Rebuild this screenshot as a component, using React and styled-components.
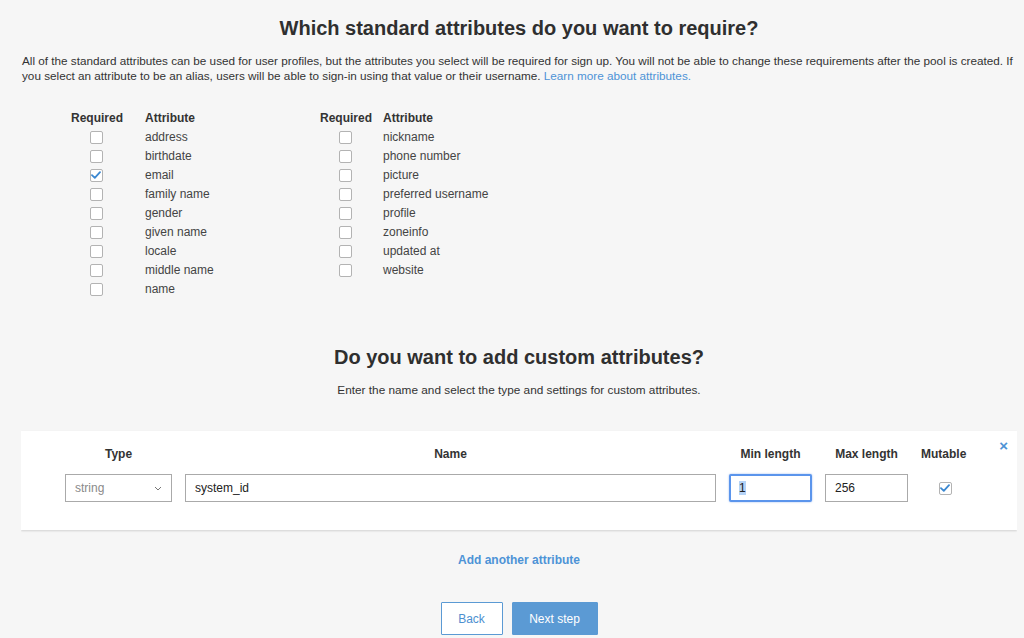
import styled, { createGlobalStyle } from 'styled-components';

const GlobalStyle = createGlobalStyle`
    html, body {
        margin: 0;
        padding: 0;
        background: #f6f6f6;
        font-family: "Liberation Sans", Arial, sans-serif;
        color: #333;
    }
`;

const Page = styled.div`
    width: 996px;
    margin-left: 21px;
    height: 638px;
    overflow: hidden;
`;

const Title = styled.h1`
    margin: 16px 0 0;
    font-size: 20px;
    line-height: 24px;
    font-weight: bold;
    text-align: center;
    color: #2f2f2f;
`;

const Intro = styled.p`
    margin: 12.5px 0 0 1px;
    font-size: 11.72px;
    line-height: 15px;
    color: #333;
    white-space: nowrap;
`;

const Link = styled.a`
    color: #4d93d6;
    text-decoration: none;
    font-weight: ${props => props.bold ? 'bold' : 'normal'};
`;

const Tables = styled.div`
    display: flex;
    margin-top: 26px;
    padding-left: 50px;
`;

const AttrTable = styled.div`
    display: grid;
    grid-template-columns: 50px auto;
    column-gap: ${props => props.gap}px;
    grid-auto-rows: 19px;
    align-items: center;
    width: ${props => props.width}px;
    align-content: start;
`;

const HeadCell = styled.div`
    font-size: 12px;
    font-weight: bold;
    color: #333;
`;

const BoxCell = styled.div`
    display: flex;
    justify-content: center;
`;

const AttrName = styled.div`
    font-size: 12px;
    color: #444;
`;

const Box = styled.span`
    box-sizing: border-box;
    width: 13px;
    height: 13px;
    border: 1px solid #b3b3b3;
    border-radius: 2px;
    background: #fff;
    display: inline-flex;
    align-items: center;
    justify-content: center;
`;

const Check = ({ checked }) => (
    <Box>
        {checked && (
            <svg width="10" height="8" viewBox="0 0 10 8">
                <path d="M1 4.2 L3.8 6.8 L9 1.2" fill="none" stroke="#3b88d1" strokeWidth="1.8" strokeLinecap="round" strokeLinejoin="round" />
            </svg>
        )}
    </Box>
);

const SubTitle = styled.h2`
    margin: 46.5px 0 0;
    font-size: 20px;
    line-height: 24px;
    font-weight: bold;
    text-align: center;
    color: #2f2f2f;
`;

const Note = styled.p`
    margin: 13.5px 0 0;
    font-size: 11.8px;
    line-height: 15px;
    text-align: center;
    color: #333;
`;

const Card = styled.div`
    position: relative;
    margin-top: 33.5px;
    background: #fff;
    box-shadow: 0 1px 2px rgba(0, 0, 0, 0.15);
    padding: 15px 0 28px 44px;
    display: grid;
    grid-template-columns: 107px 531px 83px 83px 45px;
    column-gap: 13px;
    row-gap: 12px;
    align-items: center;
`;

const ColHead = styled.div`
    font-size: 12px;
    line-height: 16px;
    font-weight: bold;
    text-align: center;
    color: #333;
`;

const Field = styled.div`
    box-sizing: border-box;
    height: 28px;
    border: 1px solid #aaa;
    background: #fff;
    display: flex;
    align-items: center;
    justify-content: space-between;
    padding: 0 ${props => props.focused ? 8 : 9}px;
    font-size: 12px;
    color: ${props => props.muted ? '#8a8a8a' : '#222'};
    ${props => props.focused && `
        border: 2px solid #5b95ec;
        border-radius: 2px;
        box-shadow: 0 0 2px rgba(70, 130, 230, 0.6);
    `}
`;

const Selected = styled.span`
    background: #b5d3f7;
`;

const Chevron = () => (
    <svg width="8" height="5" viewBox="0 0 8 5">
        <path d="M1 1 L4 4 L7 1" fill="none" stroke="#777" strokeWidth="1" />
    </svg>
);

const CenterCell = styled.div`
    display: flex;
    justify-content: center;
    padding-left: 3px;
`;

const Close = styled.span`
    position: absolute;
    top: 9px;
    right: 9px;
    font-size: 15px;
    font-weight: bold;
    line-height: 12px;
    color: #4d93d6;
`;

const AddRow = styled.div`
    margin-top: 22.5px;
    font-size: 12px;
    line-height: 15px;
    text-align: center;
`;

const Buttons = styled.div`
    display: flex;
    justify-content: center;
    gap: 9px;
    margin-top: 34.5px;
`;

const Button = styled.button`
    box-sizing: border-box;
    height: 33px;
    width: ${props => props.w}px;
    font-family: inherit;
    font-size: 12px;
    border: 1px solid #5b9ad4;
    background: ${props => props.primary ? '#5b9ad4' : '#fff'};
    color: ${props => props.primary ? '#fff' : '#4d8fd0'};
    border-radius: 1px;
    padding: 0;
`;

const left = ['address', 'birthdate', 'email', 'family name', 'gender', 'given name', 'locale', 'middle name', 'name'];
const right = ['nickname', 'phone number', 'picture', 'preferred username', 'profile', 'zoneinfo', 'updated at', 'website'];

const Table = ({ items, gap, width }) => (
    <AttrTable gap={gap} width={width}>
        <HeadCell>Required</HeadCell>
        <HeadCell>Attribute</HeadCell>
        {items.map(item => [
            <BoxCell key={item + '-b'}><Check checked={item === 'email'} /></BoxCell>,
            <AttrName key={item}>{item}</AttrName>
        ])}
    </AttrTable>
);

const App = () => {
    return (
        <Page>
            <GlobalStyle />
            <Title>Which standard attributes do you want to require?</Title>
            <Intro>
                All of the standard attributes can be used for user profiles, but the attributes you select will be required for sign up. You will not be able to change these requirements after the pool is created. If<br />
                you select an attribute to be an alias, users will be able to sign-in using that value or their username. <Link href="#">Learn more about attributes.</Link>
            </Intro>
            <Tables>
                <Table items={left} gap={24} width={249} />
                <Table items={right} gap={13} width={300} />
            </Tables>
            <SubTitle>Do you want to add custom attributes?</SubTitle>
            <Note>Enter the name and select the type and settings for custom attributes.</Note>
            <Card>
                <ColHead>Type</ColHead>
                <ColHead>Name</ColHead>
                <ColHead>Min length</ColHead>
                <ColHead>Max length</ColHead>
                <ColHead>Mutable</ColHead>
                <Field muted>string <Chevron /></Field>
                <Field>system_id</Field>
                <Field focused><Selected>1</Selected></Field>
                <Field>256</Field>
                <CenterCell><Check checked /></CenterCell>
                <Close>×</Close>
            </Card>
            <AddRow><Link href="#" bold>Add another attribute</Link></AddRow>
            <Buttons>
                <Button w={62}>Back</Button>
                <Button w={86} primary>Next step</Button>
            </Buttons>
        </Page>
    );
};

export default App;
